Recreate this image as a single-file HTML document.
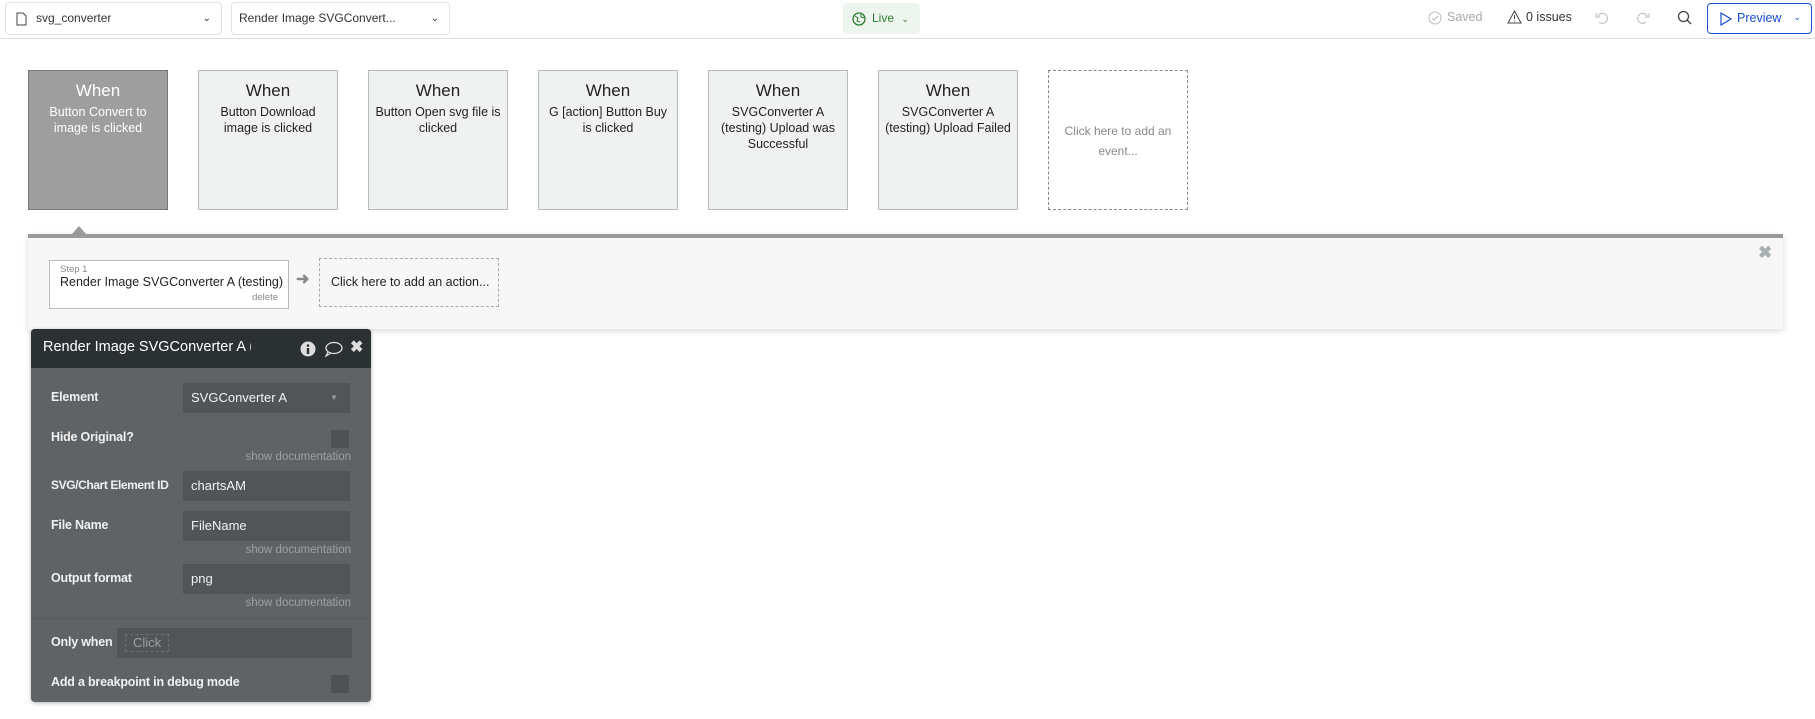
<!DOCTYPE html>
<html><head><meta charset="utf-8"><style>
*{box-sizing:border-box;margin:0;padding:0}
body{width:1815px;height:719px;background:#fff;font-family:"Liberation Sans",sans-serif;position:relative;overflow:hidden;color:#333}
.a{position:absolute}
.top{left:0;top:0;width:1815px;height:39px;border-bottom:1px solid #dcdcdc}
.dd{top:2px;height:33px;border:1px solid #e2e2e2;border-radius:4px;font-size:12px;line-height:31px;color:#333}
.card{top:70px;width:140px;height:140px;border:1px solid #b3babb;background:#f0f2f1;text-align:center;color:#222}
.card .w{font-size:17px;margin-top:10px;line-height:20px}
.card .d{font-size:12.5px;line-height:16px;margin-top:3px;padding:0 6px}
.lbl{left:20px;font-size:12.5px;color:#f0f0f0;font-weight:bold;letter-spacing:-0.2px}
.inp{left:152px;width:167px;height:30px;background:#515557;color:#f2f2f2;font-size:13px;line-height:30px;padding-left:8px}
.doc{right:20px;font-size:11.5px;color:#9aa0a3}
.cb{left:300px;width:18px;height:18px;background:#4e5254}
</style></head><body>
<div class="a top"></div>
<div class="a dd" style="left:5px;width:217px;padding-left:30px">svg_converter<span class="a" style="right:10px;top:0;font-size:10px">&#8964;</span>
<svg class="a" style="left:10px;top:9px" width="11" height="14"><path d="M1 1h6l3 3v9H1z" fill="none" stroke="#444"/></svg></div>
<div class="a dd" style="left:231px;width:219px;padding-left:7px">Render Image SVGConvert...<span class="a" style="right:10px;top:0;font-size:10px">&#8964;</span></div>
<div class="a" style="left:843px;top:3px;width:77px;height:31px;background:#eef5ee;border-radius:4px;font-size:12px;color:#2e7d32;line-height:31px;padding-left:29px">Live <span style="font-size:9px;margin-left:4px">&#8964;</span>
<svg class="a" style="left:9px;top:9px" width="14" height="14"><circle cx="7" cy="7" r="6" fill="none" stroke="#2e7d32" stroke-width="1.3"/><path d="M3 4l3 2-1 3 3 1M9 2l0 3 3 1" fill="none" stroke="#2e7d32"/></svg></div>
<svg class="a" style="left:1428px;top:11px" width="14" height="14"><circle cx="7" cy="7" r="6" fill="none" stroke="#bbb"/><path d="M4 7l2 2 4-4" fill="none" stroke="#bbb"/></svg>
<div class="a" style="left:1447px;top:10px;font-size:12.5px;color:#aaa">Saved</div>
<svg class="a" style="left:1507px;top:10px" width="15" height="14"><path d="M7.5 1L14 13H1z" fill="none" stroke="#444"/><path d="M7.5 5v4M7.5 10.5v1" stroke="#444"/></svg>
<div class="a" style="left:1526px;top:10px;font-size:12.5px;color:#333">0 issues</div>
<svg class="a" style="left:1595px;top:11px" width="14" height="14"><path d="M3 5a5 5 0 1 1 1 6" fill="none" stroke="#bbb"/><path d="M1 2v4h4" fill="none" stroke="#bbb"/></svg>
<svg class="a" style="left:1636px;top:11px" width="14" height="14"><path d="M11 5a5 5 0 1 0-1 6" fill="none" stroke="#bbb"/><path d="M13 2v4H9" fill="none" stroke="#bbb"/></svg>
<svg class="a" style="left:1677px;top:10px" width="15" height="15"><circle cx="6.5" cy="6.5" r="5" fill="none" stroke="#444" stroke-width="1.3"/><path d="M10 10l4 4" stroke="#444" stroke-width="1.3"/></svg>
<div class="a" style="left:1707px;top:3px;width:105px;height:31px;border:1px solid #1a4fd6;border-radius:4px;color:#1a4fd6;font-size:12.5px;line-height:29px;padding-left:29px">Preview<span class="a" style="right:10px;top:-1px;font-size:9px">&#8964;</span>
<svg class="a" style="left:12px;top:8px" width="12" height="14"><path d="M1 1l10 6-10 6z" fill="none" stroke="#1a4fd6" stroke-width="1.2"/></svg></div>

<div class="a card" style="left:28px;background:#9e9e9e;border-color:#7a7a7a;color:#fff"><div class="w">When</div><div class="d">Button Convert to image is clicked</div></div>
<div class="a card" style="left:198px"><div class="w">When</div><div class="d">Button Download image is clicked</div></div>
<div class="a card" style="left:368px"><div class="w">When</div><div class="d">Button Open svg file is clicked</div></div>
<div class="a card" style="left:538px"><div class="w">When</div><div class="d">G [action] Button Buy is clicked</div></div>
<div class="a card" style="left:708px"><div class="w">When</div><div class="d">SVGConverter A (testing) Upload was Successful</div></div>
<div class="a card" style="left:878px"><div class="w">When</div><div class="d">SVGConverter A (testing) Upload Failed</div></div>
<div class="a card" style="left:1048px;background:#fff;border:1px dashed #888;color:#888"><div class="d" style="margin-top:50px;font-size:12px;line-height:20px">Click here to add an event...</div></div>

<div class="a" style="left:28px;top:234px;width:1755px;height:95px;background:#f7f7f7;border-top:4px solid #9a9a9a;box-shadow:0 2px 6px rgba(0,0,0,.15)"></div>
<div class="a" style="left:72px;top:226px;width:0;height:0;border-left:7px solid transparent;border-right:7px solid transparent;border-bottom:8px solid #9a9a9a"></div>
<div class="a" style="left:1758px;top:243px;font-size:17px;color:#a9b0b4;font-weight:bold">&#10006;</div>
<div class="a" style="left:49px;top:260px;width:240px;height:49px;border:1px solid #b8bcbe;background:#fff">
<div class="a" style="left:10px;top:3px;font-size:9.5px;color:#888">Step 1</div>
<div class="a" style="left:10px;top:14px;font-size:12.5px;color:#222;white-space:nowrap">Render Image SVGConverter A (testing)</div>
<div class="a" style="right:10px;top:31px;font-size:9.5px;color:#888">delete</div></div>
<div class="a" style="left:296px;top:269px;font-size:16px;color:#888;font-weight:bold">&#10140;</div>
<div class="a" style="left:319px;top:258px;width:180px;height:49px;border:1px dashed #aaa;font-size:12.5px;line-height:47px;padding-left:11px;color:#222">Click here to add an action...</div>

<div class="a" style="left:31px;top:329px;width:340px;height:373px;background:#5f6366;border-radius:4px;overflow:hidden;box-shadow:0 1px 4px rgba(0,0,0,.3)">
<div class="a" style="left:0;top:0;width:340px;height:39px;background:#2b3032"></div>
<div class="a" style="left:12px;top:10px;font-size:14.5px;color:#fff;white-space:nowrap;width:208px;overflow:hidden">Render Image SVGConverter A (testing)</div>
<svg class="a" style="left:269px;top:12px" width="16" height="16"><circle cx="8" cy="8" r="7.5" fill="#ddd"/><rect x="6.8" y="7" width="2.4" height="6" fill="#2b3032"/><circle cx="8" cy="4.5" r="1.3" fill="#2b3032"/></svg>
<svg class="a" style="left:293px;top:12px" width="19" height="16"><ellipse cx="10" cy="7" rx="8" ry="5.5" fill="none" stroke="#ddd" stroke-width="1.3"/><path d="M4 11l-2 4 5-3" fill="none" stroke="#ddd" stroke-width="1.3"/></svg>
<div class="a" style="left:319px;top:8px;font-size:16px;color:#ddd;font-weight:bold">&#10006;</div>
<div class="a lbl" style="top:61px">Element</div>
<div class="a inp" style="top:54px">SVGConverter A<span class="a" style="right:12px;top:0;font-size:8px;color:#999">&#9660;</span></div>
<div class="a lbl" style="top:101px">Hide Original?</div>
<div class="a cb" style="top:101px"></div>
<div class="a doc" style="top:122px">show documentation</div>
<div class="a lbl" style="top:149px;font-size:12px;letter-spacing:-0.4px">SVG/Chart Element ID</div>
<div class="a inp" style="top:142px">chartsAM</div>
<div class="a lbl" style="top:189px">File Name</div>
<div class="a inp" style="top:182px">FileName</div>
<div class="a doc" style="top:215px">show documentation</div>
<div class="a lbl" style="top:242px">Output format</div>
<div class="a inp" style="top:235px">png</div>
<div class="a doc" style="top:268px">show documentation</div>
<div class="a" style="left:0;top:289px;width:340px;height:1px;background:#575b5e"></div>
<div class="a lbl" style="top:306px">Only when</div>
<div class="a inp" style="left:86px;width:235px;top:299px;padding-left:8px"><span style="border:1px dashed #6a6e70;padding:0 7px;color:#9aa0a3;line-height:16px;display:inline-block">Click</span></div>
<div class="a lbl" style="top:346px">Add a breakpoint in debug mode</div>
<div class="a cb" style="top:346px"></div>
</div>
</body></html>
